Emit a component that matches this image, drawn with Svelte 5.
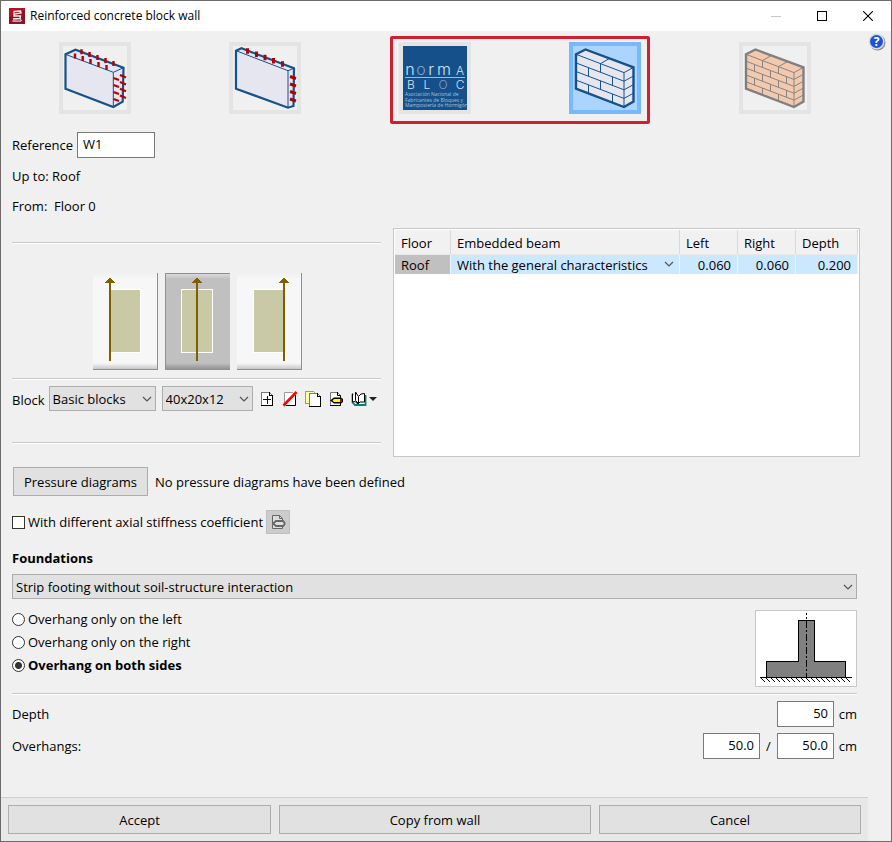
<script>
  let reference = $state('W1');
  let wallType = $state('block');
  let alignment = $state('centre');
  let overhang = $state('both');
  let stiffness = $state(false);
  let depth = $state('50');
  let overhangLeft = $state('50.0');
  let overhangRight = $state('50.0');

  const alignments = [
    { id: 'left', label: 'Axis on the left face', axis: 17, x: 17, w: 30 },
    { id: 'centre', label: 'Axis in the centre', axis: 32, x: 17, w: 30 },
    { id: 'right', label: 'Axis on the right face', axis: 47, x: 17, w: 30 }
  ];

  const overhangs = [
    { id: 'left', label: 'Overhang only on the left' },
    { id: 'right', label: 'Overhang only on the right' },
    { id: 'both', label: 'Overhang on both sides' }
  ];

  const hatch = Array.from({ length: 18 }, (_, i) => 5 + i * 5);

  // Joints of a masonry wall in perspective: courses, then the vertical joints of each course.
  function joints(rows, odd, even, caps) {
    const top = (x) => 12.3 + (x - 7) * 0.381;
    const h = 34.4 / rows;
    let d = 'M7 12.3L55 30.6L64.5 25.4M55 30.6V65';
    for (let i = 1; i < rows; i++) {
      d += `M7 ${12.3 + i * h}L55 ${30.6 + i * h}L64.5 ${25.4 + i * h}`;
    }
    for (let i = 0; i < rows; i++) {
      for (const x of i % 2 ? even : odd) d += `M${x} ${top(x) + i * h}v${h}`;
    }
    for (const x of caps) d += `M${x} ${top(x)}l9 -5.2`;
    return d;
  }
  const blockJoints = joints(4, [31.5], [19.5, 43.5], [31.5]);
  const brickJoints = joints(5, [23.5, 39.5], [15.5, 31.5, 47.5], [23.5, 39.5]);
  const wallOutline = 'M7 12.3L16.5 7.5L64.5 25.4V59.5L55 65L7 46.7Z';
</script>

{#snippet chevron()}
  <svg class="chevron" width="10" height="6" viewBox="0 0 10 6" aria-hidden="true">
    <path d="M1 1L5 5L9 1" fill="none" stroke="#555" stroke-width="1.2" />
  </svg>
{/snippet}

<div class="window">
  <header class="titlebar">
    <svg width="16" height="16" viewBox="0 0 16 16" aria-hidden="true">
      <rect width="16" height="16" fill="#b01524" />
      <path d="M0 16V9L16 2V16Z" fill="#8d1420" />
      <path d="M4.500 3.500L11.500 3L12 5L5.500 6L5 8L11.500 8L11 10.500L4 11" fill="none" stroke="#eee" stroke-width="1.4" />
      <path d="M3.500 13L12 13.200M5 4V7M11 10.500L12.500 13" stroke="#ccc" stroke-width="1.300" />
    </svg>
    <h1>Reinforced concrete block wall</h1>
    <button class="caption" aria-label="Minimize">
      <svg width="10" height="10" viewBox="0 0 10 10"><path d="M0 5.500H10" stroke="#c8c8c8" /></svg>
    </button>
    <button class="caption" aria-label="Maximize">
      <svg width="10" height="10" viewBox="0 0 10 10"><rect x=".5" y=".5" width="9" height="9" fill="none" stroke="#000" /></svg>
    </button>
    <button class="caption" aria-label="Close">
      <svg width="10" height="10" viewBox="0 0 10 10"><path d="M0 0L10 10M10 0L0 10" stroke="#000" stroke-width="1.1" /></svg>
    </button>
  </header>

  <div class="body">
    <main>
      <div class="types">
        <button class="type" aria-label="Wall with double reinforcement" onclick={() => (wallType = 'double')} class:on={wallType === 'double'}>
          <svg width="72" height="72" viewBox="0 0 72 72">
            <path d="M6.500 12.300L16.500 7.700L64.500 25.700L63.700 59.700L54.300 65L6.500 46.700Z" fill="#e6e6f0" stroke="#15528a" stroke-width="2.200" />
            <path d="M6.500 12.300L54.300 30.300L64.500 25.700M54.300 30.300V65" fill="none" stroke="#15528a" />
            <path d="M22.500 7.300v5M30.500 10v5M38.500 13v5M46.500 16v5M54.500 19v5M16 11.500v5M23.700 14v5M31.500 17v5M39.500 20v5M47.500 23v5" stroke="#b40000" stroke-width="2.400" />
            <path d="M54.500 36l5.500 2M54.500 43l5.500 2M54.500 50l5.500 2M54.500 57l5.500 2M61 33l6 2.500M61 40l6 2.500M61 46.700l6 2.500M61 53.500l6 2.500" stroke="#b40000" stroke-width="2.200" />
          </svg>
        </button>
        <button class="type" aria-label="Wall with single reinforcement" onclick={() => (wallType = 'single')} class:on={wallType === 'single'}>
          <svg width="72" height="72" viewBox="0 0 72 72">
            <path d="M7 8.700L12.500 6.300L65 26.300L64.500 64L59 65.700L7 46.700Z" fill="#e6e6f0" stroke="#15528a" stroke-width="2.200" />
            <path d="M7 8.700L59 28.700L65 26.300M59 28.700V65" fill="none" stroke="#15528a" />
            <path d="M18.500 6.300v5.500M27.500 9.500v5.500M36 12.700v5.500M44.500 16v5.500M53.500 19.300v5.500" stroke="#b40000" stroke-width="3" />
            <path d="M61 34.500l6 2M61 42l6 2M61 49.500l6 2M61 57l6 2" stroke="#b40000" stroke-width="3" />
          </svg>
        </button>
        <div class="marked">
          <button class="type" aria-label="Normabloc wall" onclick={() => (wallType = 'normabloc')} class:on={wallType === 'normabloc'}>
            <svg width="72" height="72" viewBox="0 0 72 72">
              <rect x="4" y="4" width="64" height="64" fill="#15508a" />
              <g fill="#d5e2ee" font-family="Inter, sans-serif" font-weight="300" text-anchor="middle">
                <g font-size="16">
                  <text x="11" y="33">n</text><text x="22" y="33" fill="#7fa0c0">o</text><text x="32" y="33">r</text><text x="45" y="33">m</text>
                </g>
                <g font-size="12">
                  <text x="61" y="33">A</text>
                  <text x="12" y="47">B</text><text x="28" y="47">L</text><text x="44" y="47" fill="#7fa0c0">O</text><text x="61" y="47">C</text>
                </g>
              </g>
              <path d="M6 35.500H66" stroke="#9db8d2" />
              <g fill="#a9c0d8" font-family="Open Sans, sans-serif" font-size="5">
                <text x="6" y="54">Asociación Nacional de</text>
                <text x="6" y="60">Fabricantes de Bloques y</text>
                <text x="6" y="65">Mampostería de Hormigón</text>
              </g>
            </svg>
          </button>
          <button class="type" aria-label="Concrete block wall" onclick={() => (wallType = 'block')} class:on={wallType === 'block'}>
            <svg width="72" height="72" viewBox="0 0 72 72">
              <path d={wallOutline} fill="#e6e6f0" />
              <path d={blockJoints} fill="none" stroke="#15528a" />
              <path d={wallOutline} fill="none" stroke="#15528a" stroke-width="2.400" />
            </svg>
          </button>
        </div>
        <button class="type" aria-label="Brick wall" onclick={() => (wallType = 'brick')} class:on={wallType === 'brick'}>
          <svg width="72" height="72" viewBox="0 0 72 72">
            <path d={wallOutline} fill="#f3c9ae" />
            <path d={brickJoints} fill="none" stroke="#858585" />
            <path d={wallOutline} fill="none" stroke="#808080" stroke-width="2.400" />
          </svg>
        </button>
      </div>

      <div class="content">
        <div class="reference">
          <label for="ref">Reference</label>
          <input id="ref" type="text" bind:value={reference} />
        </div>
        <p>Up to: Roof</p>
        <p>From:&nbsp; Floor 0</p>

        <div class="columns">
          <section class="left">
            <hr />
            <div class="alignments">
              {#each alignments as a}
                <button class="align" class:pressed={alignment === a.id} aria-label={a.label} onclick={() => (alignment = a.id)}>
                  <svg width="65" height="97" viewBox="0 0 65 97" shape-rendering="crispEdges">
                    <rect x={a.x - 1} y="16" width={a.w + 2} height="64" fill="#fff" />
                    <rect x={a.x} y="17" width={a.w} height="62" fill="#c9c9a5" />
                    <rect x={a.axis - 1} y="7" width="2" height="81" fill="#7f6000" />
                    <path d="M{a.axis} 4l5 6h-10z" fill="#7f6000" />
                  </svg>
                </button>
              {/each}
            </div>
            <hr />
            <div class="block">
              <label for="block">Block</label>
              <span class="select series"><select id="block"><option>Basic blocks</option></select>{@render chevron()}</span>
              <span class="select size"><select aria-label="Block size"><option>40x20x12</option></select>{@render chevron()}</span>
              <div class="tools">
                <button aria-label="New">
                  <svg width="16" height="16" viewBox="0 0 16 16" shape-rendering="crispEdges">
                    <path d="M2.500 1.500H10.500L13.500 4.500V14.500H2.500Z" fill="#fff" stroke="#777" />
                    <path d="M2 14.500H13.500V4M10.500 1V4.500H14" fill="none" stroke="#000" />
                    <path d="M4 8.500H12M8.500 5V13" stroke="#000090" />
                  </svg>
                </button>
                <button aria-label="Delete">
                  <svg width="16" height="16" viewBox="0 0 16 16">
                    <path d="M2.500 1.500H10.500L13.500 4.500V14.500H2.500Z" fill="#fff" stroke="#999" />
                    <path d="M4 14.500H13.500V4" fill="none" stroke="#000" />
                    <path d="M1.500 14.500L14.500 1" stroke="#f00" stroke-width="2.600" />
                  </svg>
                </button>
                <button aria-label="Copy">
                  <svg width="16" height="16" viewBox="0 0 16 16" shape-rendering="crispEdges">
                    <path d="M.5.5H8.500L10.500 2.500V12.500H.5Z" fill="#ffffa8" stroke="#999" />
                    <path d="M4.500 2.500H12.500L15.500 5.500V15.500H4.500Z" fill="#fff" stroke="#777" />
                    <path d="M4 15.500H15.500V5.500H12.500V2" fill="none" stroke="#000" />
                  </svg>
                </button>
                <button aria-label="Edit">
                  <svg width="16" height="16" viewBox="0 0 16 16">
                    <path d="M2.500 1.500H9.500L12.500 4.500V14.500H2.500Z" fill="#fff" stroke="#777" />
                    <path d="M2 14.500H12.500V4.500H9.500V1" fill="none" stroke="#000" />
                    <path d="M2 9.500L6 6.500H13L15 8V11L13 12.500H6Z" fill="#000" />
                    <path d="M6 8H12V11H6L4.500 9.500Z" fill="#ff0" />
                    <path d="M12 8H14V11H12Z" fill="#c00" />
                  </svg>
                </button>
                <button class="library" aria-label="Library">
                  <svg width="26" height="16" viewBox="0 0 26 16">
                    <path d="M1.500 3V11.500L4 14H14.500V4" fill="#fff" stroke="#008080" stroke-width="1.800" />
                    <path d="M1.500 2.500V11L4 10.500L7 13L9 11H13.500V2.500L10 3L7.500 5.500V12.500M7.500 5.500L4.500 1V9.500L7.500 12.500" fill="#fff" stroke="#000" />
                    <path d="M18 6H26L22 10Z" fill="#222" />
                  </svg>
                </button>
              </div>
            </div>
            <hr />
          </section>

          <section class="tablebox">
            <table>
              <thead>
                <tr><th>Floor</th><th>Embedded beam</th><th>Left</th><th>Right</th><th>Depth</th></tr>
              </thead>
              <tbody>
                <tr>
                  <td class="floor">Roof</td>
                  <td><span class="select cell"><select aria-label="Embedded beam"><option>With the general characteristics</option></select>{@render chevron()}</span></td>
                  <td class="num">0.060</td><td class="num">0.060</td><td class="num">0.200</td>
                </tr>
              </tbody>
            </table>
          </section>
        </div>

        <div class="pressure">
          <button class="btn">Pressure diagrams</button>
          <span>No pressure diagrams have been defined</span>
        </div>

        <div class="stiffness">
          <label><input type="checkbox" bind:checked={stiffness} />With different axial stiffness coefficient</label>
          <button class="edit" aria-label="Edit coefficient" disabled>
            <svg width="16" height="16" viewBox="0 0 16 16">
              <path d="M2.500 1.500H9.500L12.500 4.500V14.500H2.500Z" fill="#ddd" stroke="#666" />
              <path d="M9.500 1.500V4.500H12.500" fill="none" stroke="#666" />
              <path d="M3 9.500L6 7H13L14.500 8.500V10.500L13 12H6Z" fill="#ddd" stroke="#666" stroke-width="1.800" />
            </svg>
          </button>
        </div>

        <div class="foundation">
          <h2>Foundations</h2>
          <span class="select footing"><select aria-label="Foundation type"><option>Strip footing without soil-structure interaction</option></select>{@render chevron()}</span>
          <div class="overhang">
            <div class="radios" role="radiogroup" aria-label="Overhang">
              {#each overhangs as o}
                <label class:chosen={overhang === o.id}><input type="radio" name="overhang" value={o.id} bind:group={overhang} />{o.label}</label>
              {/each}
            </div>
            <svg class="sketch" width="102" height="77" viewBox="0 0 102 77" shape-rendering="crispEdges" role="img" aria-label="Footing with overhang on both sides">
              <rect x=".5" y=".5" width="101" height="76" fill="#fff" stroke="#c8c8c8" />
              <path d="M43.500 10.500H59.500V51.500H90.500V67.500H11.500V51.500H43.500Z" fill="#808080" stroke="#000" />
              <path d="M51.500 3V67" stroke="#000" stroke-dasharray="7 2 2 2" stroke-dashoffset="5" />
              <path d="M5 67.500H97" stroke="#000" />
              {#each hatch as x}
                <path d="M{x} 67l5 5" stroke="#000" />
              {/each}
            </svg>
          </div>
          <hr />
          <div class="field">
            <label for="depth">Depth</label>
            <input id="depth" class="number" type="text" bind:value={depth} /><span class="unit">cm</span>
          </div>
          <div class="field">
            <label for="oleft">Overhangs:</label>
            <input id="oleft" class="number" type="text" bind:value={overhangLeft} /><span class="slash">/</span>
            <input class="number" type="text" aria-label="Right overhang" bind:value={overhangRight} /><span class="unit">cm</span>
          </div>
        </div>
      </div>

      <footer>
        <button class="btn">Accept</button>
        <button class="btn">Copy from wall</button>
        <button class="btn">Cancel</button>
      </footer>
    </main>
    <aside>
      <button aria-label="Help">
        <svg width="18" height="18" viewBox="0 0 18 18">
          <circle cx="9.500" cy="9.500" r="8" fill="#8a8a8a" />
          <circle cx="8.500" cy="8.500" r="8" fill="#d9dde6" />
          <circle cx="8.500" cy="8.500" r="6.500" fill="#1c50e0" />
          <text x="8.500" y="13" text-anchor="middle" font-family="Open Sans, sans-serif" font-weight="700" font-size="12" fill="#fff">?</text>
        </svg>
      </button>
    </aside>
  </div>
</div>

<style>
  :global(body) {
    background: #f0f0f0;
  }
  .window {
    box-sizing: border-box;
    min-height: 100vh;
    display: flex;
    flex-direction: column;
    border: 1px solid #6b6b6b;
    background: #f0f0f0;
    color: #000;
    font: 13px/18px 'Open Sans', 'Noto Sans', sans-serif;
  }
  .window :is(button, input, select) {
    box-sizing: border-box;
    margin: 0;
    padding: 0;
    font: inherit;
    color: inherit;
    border-radius: 0;
  }
  button {
    border: 0;
    background: none;
  }
  svg {
    display: block;
  }
  p, h1, h2 {
    margin: 0;
  }
  .titlebar {
    display: flex;
    align-items: center;
    height: 30px;
    padding-left: 8px;
    background: #fff;
  }
  h1 {
    flex: 1;
    margin-left: 5px;
    font-size: 12px;
    font-weight: 400;
  }
  .caption {
    display: flex;
    align-items: center;
    justify-content: center;
    width: 46px;
    height: 30px;
  }
  .body {
    flex: 1;
    display: flex;
  }
  main {
    flex: 1;
    min-width: 0;
    display: flex;
    flex-direction: column;
  }
  aside {
    width: 23px;
    padding-top: 2px;
    box-sizing: border-box;
  }
  aside button {
    margin-left: 4px;
  }
  .types {
    display: grid;
    grid-template-columns: repeat(5, 1fr);
    justify-items: center;
    padding: 11px 8px 18px 9px;
  }
  .type {
    width: 72px;
    height: 72px;
    box-shadow: inset 0 0 0 4px #e4e4e4;
  }
  .type.on {
    background: #abd4ff;
    box-shadow: inset 0 0 0 4px #76b9ff;
  }
  .marked {
    grid-column: span 2;
    justify-self: stretch;
    position: relative;
    display: flex;
    justify-content: space-around;
  }
  .marked::after {
    content: '';
    position: absolute;
    inset: -6px 40px -10px 40px;
    border: 3px solid #cf202f;
    border-radius: 2px;
    pointer-events: none;
  }
  .content {
    flex: 1;
    padding: 0 8px 0 11px;
  }
  .reference {
    display: flex;
    align-items: center;
    gap: 4px;
    margin-bottom: 9px;
  }
  input[type='text'] {
    height: 26px;
    border: 1px solid #7a7a7a;
    background: #fff;
    padding: 0 5px 2px;
  }
  .reference input {
    width: 78px;
  }
  p {
    margin-bottom: 12px;
  }
  hr {
    height: 1px;
    margin: 0;
    border: 0;
    border-top: 1px solid #c8c8c8;
    background: #fff;
  }
  .columns {
    display: grid;
    grid-template-columns: 369fr 467fr;
    gap: 12px;
    padding-top: 1px;
  }
  .left {
    padding: 14px 0 13px;
  }
  .alignments {
    display: flex;
    justify-content: center;
    gap: 7px;
    padding: 29px 0 8px 2px;
  }
  .align {
    background: linear-gradient(#f0f0f0, #f7f7f7 6px, #f7f7f7 90px, #c0c0c0);
    box-shadow: inset -1px -1px #909090;
  }
  .align.pressed {
    background: linear-gradient(#dedede, #c0c0c0 6px, #c0c0c0 90px, #8c8c8c);
    box-shadow: inset 1px 1px #909090;
  }
  .block {
    display: flex;
    align-items: center;
    gap: 6px;
    padding: 6px 0 31px;
  }
  .block label {
    margin-right: -2px;
    padding-top: 3px;
  }
  .select {
    position: relative;
    display: block;
  }
  select {
    appearance: none;
    display: block;
    width: 100%;
    height: 25px;
    border: 1px solid #adadad;
    background: #e1e1e1;
  }
  .window .select select {
    padding-left: 3px;
  }
  .chevron {
    position: absolute;
    right: 4px;
    top: 10px;
    pointer-events: none;
  }
  .series {
    width: 107px;
  }
  .size {
    width: 91px;
  }
  .tools {
    display: flex;
    gap: 7px;
  }
  .tablebox {
    border: 1px solid #c8c8c8;
    background: #fff;
    padding: 1px;
  }
  table {
    width: 100%;
    table-layout: fixed;
    border-collapse: collapse;
  }
  th, td {
    padding: 0 6px;
    text-align: left;
    font-weight: 400;
  }
  th {
    height: 22px;
    padding-top: 2px;
    background: #f1f1f1;
    border-right: 1px solid #d9d9d9;
    border-bottom: 1px solid #e8e8e8;
  }
  th:nth-child(1) {
    width: 43px;
  }
  th:nth-child(n + 3) {
    width: 45px;
  }
  th:last-child {
    width: 49px;
  }
  td {
    height: 19px;
    background: #cce8ff;
    border-right: 1px solid #eaf4fc;
  }
  .floor {
    background: #c0c0c0;
  }
  .num {
    text-align: right;
  }
  .cell select {
    height: 19px;
    border: 0;
    background: none;
  }
  .window .cell select {
    padding: 0;
  }
  .cell .chevron {
    top: 6px;
    right: -1px;
  }
  .btn {
    height: 29px;
    border: 1px solid #adadad;
    background: #e1e1e1;
  }
  .pressure {
    display: flex;
    align-items: center;
    gap: 7px;
    padding: 10px 0 14px 1px;
  }
  .pressure .btn {
    width: 135px;
  }
  .stiffness {
    display: flex;
    align-items: center;
    gap: 3px;
  }
  .stiffness label, .radios label {
    display: flex;
    align-items: center;
    gap: 3px;
  }
  input[type='checkbox'], input[type='radio'] {
    appearance: none;
    width: 13px;
    height: 13px;
    border: 1px solid #333;
    background: #fff;
  }
  input[type='checkbox']:checked {
    box-shadow: inset 0 0 0 2px #fff;
    background: #333;
  }
  .window input[type='radio'] {
    border-radius: 50%;
  }
  input[type='radio']:checked {
    background: radial-gradient(circle, #333 3px, #fff 4px);
  }
  .edit {
    display: flex;
    align-items: center;
    justify-content: center;
    width: 24px;
    height: 24px;
    border: 1px solid #bfbfbf;
    background: #ccc;
  }
  .foundation {
    padding: 15px 3px 0 0;
  }
  h2 {
    font-size: 13px;
    font-weight: 700;
    margin-bottom: 7px;
  }
  .overhang {
    display: flex;
    justify-content: space-between;
    padding: 11px 0 6px;
  }
  .radios {
    display: flex;
    flex-direction: column;
    gap: 5px;
  }
  .chosen {
    font-weight: 700;
  }
  .field {
    display: flex;
    align-items: center;
    margin-top: 6px;
  }
  .field label {
    flex: 1;
  }
  .number {
    width: 57px;
    text-align: right;
  }
  .unit {
    width: 23px;
    text-align: right;
  }
  .slash {
    width: 17px;
    text-align: center;
  }
  footer {
    display: grid;
    grid-template-columns: 263fr 312fr 262fr;
    gap: 8px;
    padding: 7px;
    border-top: 1px solid #cfcfcf;
    background: #e8e8e8;
  }
</style>
